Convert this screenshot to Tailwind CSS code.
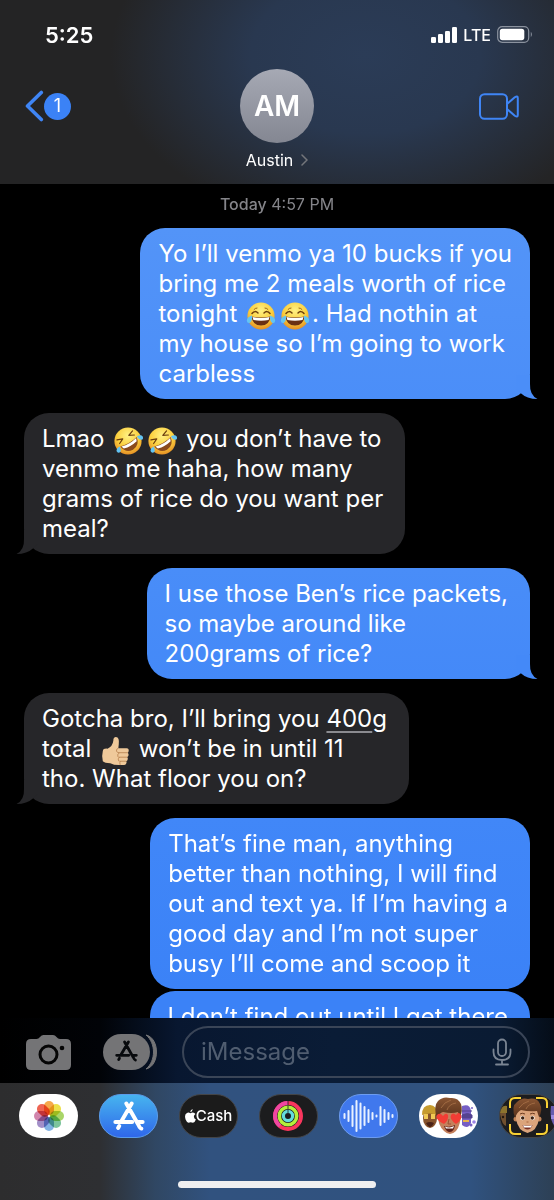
<!DOCTYPE html>
<html lang="en">

<head>
    <meta charset="UTF-8">
    <meta name="viewport" content="width=device-width, initial-scale=1.0">
    <title>Messages - Austin</title>
    <script src="https://cdn.jsdelivr.net/npm/@tailwindcss/browser@4"></script>
</head>

<body class="bg-black font-['Inter','Liberation_Sans',sans-serif] text-white">
    <!-- Shared shapes -->
    <svg class="absolute size-0" aria-hidden="true">
        <defs>
            <radialGradient id="face" cx="50%" cy="30%" r="75%">
                <stop offset="0" stop-color="#fff184" />
                <stop offset=".55" stop-color="#fbcf3e" />
                <stop offset="1" stop-color="#e0831f" />
            </radialGradient>
            <linearGradient id="store" x1="0" y1="0" x2="0" y2="1">
                <stop offset="0" stop-color="#47b5ef" />
                <stop offset="1" stop-color="#2f66ea" />
            </linearGradient>
            <linearGradient id="hair" x1="0" y1="0" x2="0" y2="1">
                <stop offset="0" stop-color="#8a5532" />
                <stop offset="1" stop-color="#55301a" />
            </linearGradient>
            <symbol id="joy" viewBox="0 0 30 30">
                <circle cx="15" cy="15" r="13.6" fill="url(#face)" />
                <path d="M6 12.500Q9 9 12 12M18 12Q21 9 24 12.500" fill="none" stroke="#6b3d0c" stroke-width="1.500" stroke-linecap="round" />
                <path d="M8 8.500Q9 7 11 7M19 7Q21 7 22 8.500" fill="none" stroke="#9a6416" stroke-width="1" stroke-linecap="round" />
                <path d="M5.500 15.500Q15 17.500 24.500 15.500Q23.500 24.500 15 24.500T5.500 15.500Z" fill="#693014" />
                <path d="M6.500 16Q15 18 23.500 16L22.600 19Q15 20.500 7.400 19Z" fill="#fff" />
                <path d="M6 14.500Q1 16 .8 19.500Q1 22.500 3.500 22Q6.500 20.500 6 14.500ZM24 14.500Q29 16 29.200 19.500Q29 22.500 26.500 22Q23.500 20.500 24 14.500Z" fill="#63c4f3" />
            </symbol>
            <symbol id="rofl" viewBox="0 0 30 30">
                <circle cx="15" cy="15" r="13.600" fill="url(#face)" />
                <g transform="rotate(-30 15 15)">
                    <path d="M6 8.500L11.500 10.500L6.500 13M24 8.500L18.500 10.500L23.500 13" fill="none" stroke="#6b3d0c" stroke-width="1.200" stroke-linecap="round" stroke-linejoin="round" />
                    <path d="M5.500 16Q15 18.500 24.500 16Q23 25 15 25T5.500 16Z" fill="#8a4a1c" />
                    <path d="M6.500 16.500Q15 19 23.500 16.500L22.400 19.500Q15 21.300 7.600 19.500Z" fill="#fff" />
                    <path d="M5 15.500Q.5 15.500 0 18.500Q.5 21.500 3 20.500Q5 19.500 5 15.500ZM25 15.500Q29.500 15.500 30 18.500Q29.500 21.500 27 20.500Q25 19.500 25 15.500Z" fill="#63c4f3" />
                </g>
            </symbol>
            <symbol id="thumb" viewBox="0 0 30 32">
                <path d="M2 16Q2.500 13 7 13.500Q12.500 11 13.200 5Q13.200 1 16 1Q20 1.300 19 9L18.500 13H27.500Q30 13.300 29.600 16Q29.300 17.500 28.500 17.800Q30 19 29.300 21Q29 22 28 22.500Q29.300 24 28.300 25.800Q27.800 26.500 27 26.800Q28 28.500 26.500 30Q25.500 31 21 31Q14 31.300 10 29Q4 29 2 27Q.5 22 2 16Z" fill="#efc99a" />
                <path d="M18.500 13Q16.500 13.500 16.500 16Q17 18 20 17.800H28.500M20 17.800Q17 19 18 22Q18.500 22.800 20 22.600H28M20 22.600Q17.500 24 18.800 26.500Q19.500 27 21 26.900H27M21 26.900Q19.500 28 20.500 31" fill="none" stroke="#b98452" stroke-width=".9" />
            </symbol>
            <symbol id="store-a" viewBox="0 0 30 28">
                <path d="M12.500 2.300L23.800 22.200Q25.300 25.600 26.600 25.800M17.500 2.300L7.600 19.300M2.200 19.600H18M22.200 19.600H27.800M5.800 23.400L4.800 25.200" fill="none" stroke="currentColor" stroke-width="3.700" stroke-linecap="round" />
            </symbol>
            <symbol id="tail" viewBox="0 0 22 24">
                <path d="M0 0H14V9Q13.500 20 21.500 24Q11 24 4.500 18L0 14Z" fill="currentColor" />
            </symbol>
        </defs>
    </svg>

    <div class="flex h-screen flex-col overflow-hidden">
        <!-- Header -->
        <header class="shrink-0 bg-[#242425] bg-[radial-gradient(ellipse_46%_95%_at_66%_30%,#2b3c57_0%,#293850_45%,#24242500_100%)] pb-3">
            <div class="flex h-[69px] items-center justify-between pr-[21px] pl-[45px]">
                <time class="text-[22px] leading-6 font-semibold">5:25</time>
                <div class="flex items-center gap-1.5">
                    <svg class="h-4 w-[26px]" viewBox="0 0 26 16" fill="#fff" role="img" aria-label="Signal">
                        <rect x="0" y="10" width="5" height="6" rx="1.300" />
                        <rect x="7" y="7" width="5" height="9" rx="1.300" />
                        <rect x="14" y="4" width="5" height="12" rx="1.300" />
                        <rect x="21" y="0" width="5" height="16" rx="1.300" />
                    </svg>
                    <span class="text-base leading-5 font-medium">LTE</span>
                    <svg class="h-[17px] w-9" viewBox="0 0 36 17" role="img" aria-label="Battery">
                        <rect x=".7" y=".7" width="31" height="15.600" rx="4.500" fill="none" stroke="#8b929e" stroke-width="1.200" />
                        <rect x="2.800" y="2.800" width="24.500" height="11.400" rx="2.600" fill="#fff" />
                        <path d="M33.800 5.800Q36 8.500 33.800 11.200Z" fill="#8b929e" />
                    </svg>
                </div>
            </div>
            <div class="grid grid-cols-3 pr-[35px] pl-[25px]">
                <a href="#" class="flex h-[74px] items-center" aria-label="Back, 1 unread">
                    <svg class="h-8 w-[19px]" viewBox="0 0 19 32" fill="none" stroke="#3f85f5" stroke-width="3.600" stroke-linecap="round" stroke-linejoin="round">
                        <path d="M16.300 2.500L2.500 16L16.300 29.500" />
                    </svg>
                    <span class="flex size-[27px] items-center justify-center rounded-full bg-[#3b82f6] text-lg">1</span>
                </a>
                <button type="button" class="flex flex-col items-center gap-[5px] pl-2.5">
                    <span class="flex size-[74px] items-center justify-center rounded-full bg-linear-to-b from-[#a6a9b4] to-[#848792] text-[28px] font-semibold">AM</span>
                    <span class="flex items-center gap-2 text-base leading-6">Austin
                        <svg class="h-3 w-[7px]" viewBox="0 0 7 12" fill="none" stroke="#74767b" stroke-width="1.500" stroke-linecap="round">
                            <path d="M1 1L6 6L1 11" />
                        </svg>
                    </span>
                </button>
                <button type="button" class="flex h-[74px] items-center justify-end" aria-label="FaceTime">
                    <svg class="h-[27px] w-10" viewBox="0 0 40 27" fill="none" stroke="#3f85f5" stroke-width="2" stroke-linejoin="round">
                        <rect x="1" y="1.200" width="27" height="24.600" rx="4.500" />
                        <path d="M28 11L35.800 4.300Q38.800 2.200 38.800 5V22Q38.800 24.800 35.800 22.700L28 16" />
                    </svg>
                </button>
            </div>
        </header>

        <!-- Conversation -->
        <main class="flex min-h-0 flex-1 flex-col overflow-hidden px-6 text-2xl leading-[30px]">
            <p class="shrink-0 pt-2.5 pb-[14px] text-center text-base leading-5 text-[#85858a]"><span class="font-medium">Today</span> 4:57 PM</p>

            <div class="relative ml-auto w-fit shrink-0 rounded-[25px] bg-linear-to-b from-[#5394f8] to-[#4b8ef8] pt-[11px] pr-[18px] pb-2.5 pl-[18px] whitespace-nowrap">
                Yo I’ll venmo ya 10 bucks if you<br>bring me 2 meals worth of rice<br>tonight
                <svg class="mx-0.5 -my-1 inline h-[30px] w-[30px] align-[-5px]" role="img" aria-label="Tears of joy"><use href="#joy" /></svg><svg class="mx-0.5 -my-1 inline h-[30px] w-[30px] align-[-5px]" role="img" aria-label="Tears of joy"><use href="#joy" /></svg>. Had nothin at<br>my house so I’m going to work<br>carbless
                <svg class="absolute -right-2 bottom-0 h-6 w-[22px] text-[#4b8ef8]" aria-hidden="true"><use href="#tail" /></svg>
            </div>

            <div class="relative mt-[14px] w-fit shrink-0 rounded-[25px] bg-[#262629] pt-[11px] pr-[22px] pb-2.5 pl-[18px] whitespace-nowrap">
                Lmao
                <svg class="mx-0.5 -my-1 inline h-[30px] w-[30px] align-[-5px]" role="img" aria-label="Rolling on the floor laughing"><use href="#rofl" /></svg><svg class="mx-0.5 -my-1 inline h-[30px] w-[30px] align-[-5px]" role="img" aria-label="Rolling on the floor laughing"><use href="#rofl" /></svg>
                you don’t have to<br>venmo me haha, how many<br>grams of rice do you want per<br>meal?
                <svg class="absolute bottom-0 -left-2 h-6 w-[22px] -scale-x-100 text-[#262629]" aria-hidden="true"><use href="#tail" /></svg>
            </div>

            <div class="relative mt-[14px] ml-auto w-fit shrink-0 rounded-[25px] bg-linear-to-b from-[#498df8] to-[#4489f8] pt-[11px] pr-[22px] pb-2.5 pl-[18px] whitespace-nowrap">
                I use those Ben’s rice packets,<br>so maybe around like<br>200grams of rice?
                <svg class="absolute -right-2 bottom-0 h-6 w-[22px] text-[#4489f8]" aria-hidden="true"><use href="#tail" /></svg>
            </div>

            <div class="relative mt-[14px] w-fit shrink-0 rounded-[25px] bg-[#262629] pt-[11px] pr-[22px] pb-2.5 pl-[18px] whitespace-nowrap">
                Gotcha bro, I’ll bring you <span class="underline decoration-[#8b8b90] decoration-2 underline-offset-4">400</span>g<br>total
                <svg class="mx-0.5 -my-1 inline h-[30px] w-[30px] align-[-5px]" role="img" aria-label="Thumbs up"><use href="#thumb" /></svg>
                won’t be in until 11<br>tho. What floor you on?
                <svg class="absolute bottom-0 -left-2 h-6 w-[22px] -scale-x-100 text-[#262629]" aria-hidden="true"><use href="#tail" /></svg>
            </div>

            <div class="mt-[14px] ml-auto w-fit shrink-0 rounded-[25px] bg-linear-to-b from-[#4187f8] to-[#3b82f7] pt-[11px] pr-[22px] pb-2.5 pl-[18px] whitespace-nowrap">
                That’s fine man, anything<br>better than nothing, I will find<br>out and text ya. If I’m having a<br>good day and I’m not super<br>busy I’ll come and scoop it
            </div>

            <div class="mt-0.5 ml-auto w-fit shrink-0 rounded-[25px] bg-[#3b82f7] pt-[11px] pr-[22px] pb-2.5 pl-[18px] whitespace-nowrap">
                I don’t find out until I get there
            </div>
        </main>

        <!-- Compose bar -->
        <form class="flex h-[65px] shrink-0 items-center bg-[linear-gradient(90deg,#000_0%,#010307_18%,#081730_32%,#0a1c36_60%,#0a1b33_90%,#050d18_100%)] pt-0.5 pr-6 pl-[26px]">
            <button type="button" class="mr-8" aria-label="Camera">
                <svg class="h-9 w-[45px]" viewBox="0 0 45 36">
                    <path d="M5 5H10.500Q12.500 5 14 3T17.500 1H27Q29 1 30.500 3T34 5H40Q45 5 45 10V31Q45 36 40 36H5Q0 36 0 31V10Q0 5 5 5Z" fill="#747476" />
                    <circle cx="22.500" cy="20.500" r="8.500" fill="none" stroke="#050505" stroke-width="3" />
                    <circle cx="36" cy="14" r="2.300" fill="#050505" />
                </svg>
            </button>
            <button type="button" class="mr-[25px]" aria-label="Apps">
                <svg class="h-9 w-[54px]" viewBox="0 0 54 36">
                    <rect width="47" height="36" rx="18" fill="#747476" />
                    <path d="M43 1C57 4 57 32 43 35C53 27 53 9 43 1Z" fill="#747476" stroke="#747476" />
                    <svg x="12" y="6" width="23" height="22" class="text-[#080a0d]"><use href="#store-a" /></svg>
                </svg>
            </button>
            <div class="flex h-[52px] min-w-0 flex-1 items-center rounded-full border-2 border-[#3a4557] pr-4 pl-[17px]">
                <input type="text" aria-label="Message" placeholder="iMessage" class="min-w-0 flex-1 bg-transparent text-2xl outline-none placeholder:text-[#505d70]">
                <button type="button" aria-label="Dictate">
                    <svg class="h-7 w-5" viewBox="0 0 20 28" fill="none" stroke="#7b8593" stroke-width="1.800" stroke-linecap="round">
                        <rect x="6" y="1.500" width="8" height="16.500" rx="4" />
                        <path d="M1.500 11.500V14Q1.500 22 10 22T18.500 14V11.500M10 22V26.500M4 26.500H16" />
                    </svg>
                </button>
            </div>
        </form>

        <!-- App drawer -->
        <footer class="h-[117px] shrink-0 bg-[linear-gradient(90deg,#2d2d2e_0%,#2e2f32_18%,#304763_28%,#31527f_38%,#30527f_85%,#2d4055_100%)]">
            <nav class="flex gap-[21px] overflow-hidden pt-[11px] pl-[19px]" aria-label="iMessage apps">
                <button type="button" class="h-11 w-[59px] shrink-0" aria-label="Photos">
                    <svg class="h-11 w-[59px]" viewBox="0 0 59 44">
                        <rect width="59" height="44" rx="22" fill="#fff" />
                        <g transform="translate(30 22)" class="*:mix-blend-multiply">
                            <rect x="-5" y="-15" width="10" height="14" rx="5" fill="#f6a94c" />
                            <rect x="-5" y="-15" width="10" height="14" rx="5" fill="#ede04a" transform="rotate(45)" />
                            <rect x="-5" y="-15" width="10" height="14" rx="5" fill="#a9d568" transform="rotate(90)" />
                            <rect x="-5" y="-15" width="10" height="14" rx="5" fill="#7cc49c" transform="rotate(135)" />
                            <rect x="-5" y="-15" width="10" height="14" rx="5" fill="#82b2e4" transform="rotate(180)" />
                            <rect x="-5" y="-15" width="10" height="14" rx="5" fill="#a28fc8" transform="rotate(225)" />
                            <rect x="-5" y="-15" width="10" height="14" rx="5" fill="#d185ac" transform="rotate(270)" />
                            <rect x="-5" y="-15" width="10" height="14" rx="5" fill="#ee6453" transform="rotate(315)" />
                        </g>
                    </svg>
                </button>
                <button type="button" class="h-11 w-[59px] shrink-0" aria-label="App Store">
                    <svg class="h-11 w-[59px]" viewBox="0 0 59 44">
                        <rect x=".5" y=".5" width="58" height="43" rx="21.500" fill="url(#store)" stroke="#5a9cea" />
                        <svg x="14" y="7" width="32" height="30" class="text-white"><use href="#store-a" /></svg>
                    </svg>
                </button>
                <button type="button" class="flex h-11 w-[59px] shrink-0 items-center justify-center rounded-full border border-[#444547] bg-[#1b1b1b] text-[15px] font-medium" aria-label="Apple Cash">
                    <svg class="h-[14px] w-[11px] shrink-0" viewBox="0 0 11 14" fill="#fff">
                        <path d="M7.600 0Q7.700 2.600 5.300 3.300Q5.200 1 7.600 0ZM5.500 4.200Q6.300 3.500 7.800 3.500Q9.600 3.600 10.400 4.900Q8.800 6 8.900 7.700Q9 9.700 10.900 10.500Q9.700 13.700 8 13.700Q6.800 13.200 5.700 13.200T3.500 13.700Q1.800 13.500.6 10.500Q-1 5.200 2 3.900Q3.500 3.200 5.500 4.200Z" />
                    </svg>
                    Cash
                </button>
                <button type="button" class="h-11 w-[59px] shrink-0" aria-label="Fitness">
                    <svg class="h-11 w-[59px]" viewBox="0 0 59 44" fill="none">
                        <rect x=".5" y=".5" width="58" height="43" rx="21.500" fill="#1c1c1e" stroke="#444547" />
                        <circle cx="29" cy="22" r="13" stroke="#fa365d" stroke-width="4" />
                        <path d="M29 9A13 13 0 0 0 16 22A13 13 0 0 0 21 32" stroke="#f046a2" stroke-width="4" />
                        <circle cx="29" cy="22" r="8.700" stroke="#b4ef3c" stroke-width="3.600" />
                        <circle cx="29" cy="22" r="4.600" stroke="#63dcdc" stroke-width="3.200" />
                        <path d="M29 7V11M29 11.500V15M29 16V19" stroke="#1c1c1e" stroke-width=".8" />
                    </svg>
                </button>
                <button type="button" class="h-11 w-[59px] shrink-0" aria-label="Audio messages">
                    <svg class="h-11 w-[59px]" viewBox="0 0 59 44">
                        <rect x=".5" y=".5" width="58" height="43" rx="21.500" fill="#4078ed" stroke="#6d9cf0" />
                        <path d="M5.500 20V24M9.500 17V27M13.500 12V32M17.500 7V37M21.500 9.500V34.500M25.500 13V31M29.500 16V28M33.500 19V25M37.500 21.500V22.500M41.500 13V31M45.500 16V28M49.500 19V25M53.500 21V23" stroke="#e9f1ff" stroke-width="2" stroke-linecap="round" />
                    </svg>
                </button>
                <button type="button" class="h-11 w-[59px] shrink-0" aria-label="Memoji stickers">
                    <svg class="h-11 w-[59px]" viewBox="0 0 59 44">
                        <rect width="59" height="44" rx="22" fill="#fff" />
                        <ellipse cx="11" cy="24" rx="7" ry="10" fill="#87532c" />
                        <path d="M3 21Q3 11 11 11Q18 11 18 21Q11 18 3 21Z" fill="#c69b2e" />
                        <path d="M5 20H9V25H5ZM12 20H16V25H12Z" fill="#f0c955" />
                        <path d="M7 29Q11 27 15 29Q13 33 11 33T7 29Z" fill="#4b2317" />
                        <path d="M43 12Q51 9 52 17V29Q49 36 43 31Z" fill="#765fc4" />
                        <path d="M43 17H53M43 21Q49 18 53 21V24H43Z" fill="#54438f" stroke="#54438f" />
                        <path d="M44 26H50V28H44Z" fill="#e8b54b" />
                        <circle cx="53" cy="14" r="1" fill="#765fc4" />
                        <circle cx="55" cy="28" r="1.800" fill="#9b83e5" />
                        <circle cx="52" cy="31" r="1.500" fill="#765fc4" />
                        <path d="M18 18Q18 7 30 7T42 18Q42 31 37 37Q31 43 25 37Q19 32 18 18Z" fill="#c4805c" />
                        <path d="M18 25Q14 12 19 7Q24 2 31 4Q39 3 42 10Q44 16 41 24Q40 21 39 18Q33 20 24 18Q20 19 18 25Z" fill="url(#hair)" />
                        <path d="M22 14Q25 8 32 6M28 16Q30 10 37 9" fill="none" stroke="#a06a42" />
                        <path d="M25 32Q31 34 36 31Q35 38 31 38T25 32Z" fill="#5c211a" />
                        <path d="M26 32.500Q31 34.500 35 32L34 34.500H27Z" fill="#fff" />
                        <path d="M25 30Q15 25 18 21Q21 18 24 22Q27 18 29 21Q30 26 25 30ZM37 30Q30 25 32 21Q34 18 37 21Q40 17 42 21Q44 25 37 30Z" fill="#f23d35" />
                        <path d="M30 25L29 30H32" stroke="#985438" fill="none" />
                    </svg>
                </button>
                <button type="button" class="h-11 w-[59px] shrink-0" aria-label="Memoji">
                    <svg class="h-11 w-[59px]" viewBox="0 0 59 44">
                        <rect x=".5" y=".5" width="58" height="43" rx="21.500" fill="#1c1c1e" stroke="#444547" />
                        <path d="M1 20Q3 11 7 12V32Q3 31 1 20Z" fill="#71502f" />
                        <path d="M1 19Q3 10 8 12V19Z" fill="#8c732e" />
                        <circle cx="4" cy="23" r="1.200" fill="#22170f" />
                        <path d="M52 12H57V33Q50 28 52 12Z" fill="#695caf" />
                        <path d="M52 21H58V25H52Z" fill="#9b87de" />
                        <circle cx="17" cy="25" r="2.500" fill="#c08257" />
                        <circle cx="40" cy="25" r="2.500" fill="#c08257" />
                        <path d="M17 16Q18 8 28 8T40 16L40 25Q38 37 28.500 39Q19 37 17 25Z" fill="#dba47b" />
                        <path d="M16 24Q12 12 18 8Q23 3 29 5Q38 3 41 10Q44 16 40 23Q39 20 38 17Q30 18 22 16Q18 18 16 24Z" fill="url(#hair)" />
                        <path d="M20 14Q23 9 30 7M27 15Q29 10 36 9" fill="none" stroke="#a06a42" />
                        <circle cx="23.500" cy="24" r="2.200" fill="#fff" />
                        <circle cx="33.500" cy="24" r="2.200" fill="#fff" />
                        <circle cx="23.700" cy="24" r="1.700" fill="#39200f" />
                        <circle cx="33.300" cy="24" r="1.700" fill="#39200f" />
                        <path d="M21 20Q23 18.500 26 20M31 20Q34 18.500 36 20" fill="none" stroke="#6c3c22" />
                        <path d="M27.500 28H29.500" stroke="#a8653f" />
                        <path d="M23.500 31Q28.500 32 33.500 31Q32 35.500 28.500 35.500T23.500 31Z" fill="#7a3024" />
                        <path d="M24 31.200Q28.500 32.200 33 31.200L32 33.500H25Z" fill="#fff" />
                        <path d="M11 14V9Q11 4 16 4H22M37 4H43Q48 4 48 9V14M11 30V35Q11 40 16 40H22M37 40H43Q48 40 48 35V30" fill="none" stroke="#f7d034" stroke-width="2" />
                    </svg>
                </button>
            </nav>
            <div class="mx-auto mt-[43px] h-[7px] w-[198px] rounded-full bg-[#efeff0]"></div>
        </footer>
    </div>
</body>

</html>
